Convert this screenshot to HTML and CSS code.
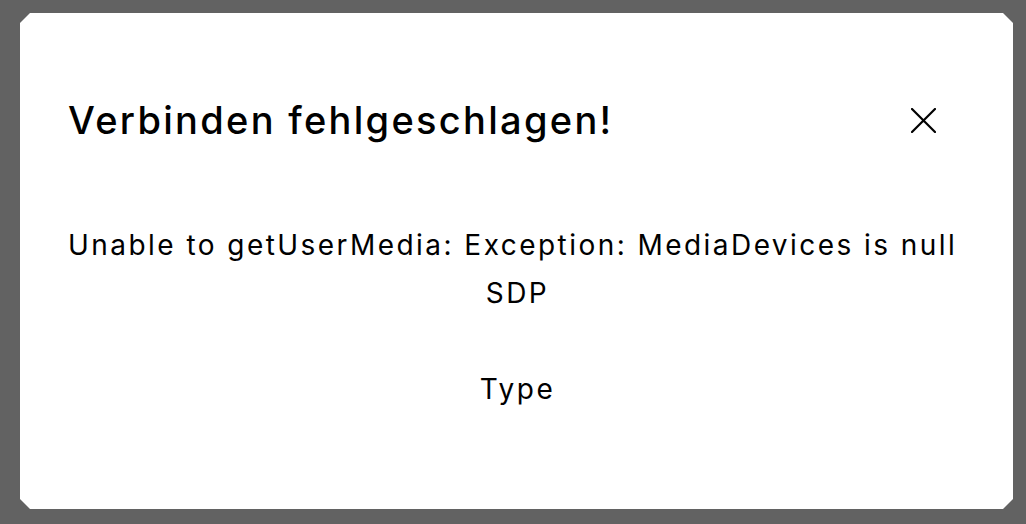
FILE: index.html
```html
<!DOCTYPE html>
<html lang="de">
<head>
<meta charset="utf-8">
<title>Verbinden fehlgeschlagen</title>
<link rel="stylesheet" href="styles.css">
</head>
<body>
<div class="overlay">
  <div class="modal">
    <div class="modal-header">
      <h2 class="modal-title">Verbinden fehlgeschlagen!</h2>
      <button class="close" aria-label="Schließen">
        <svg width="25" height="25" viewBox="0 0 25 25" fill="none" stroke="#000" stroke-width="2.2" stroke-linecap="round">
          <path d="M1 1L24 24M24 1L1 24"/>
        </svg>
      </button>
    </div>
    <div class="modal-body">
      <p class="line line-wide">Unable to getUserMedia: Exception: MediaDevices is null</p>
      <p class="line">SDP</p>
      <p class="line blank">&nbsp;</p>
      <p class="line">Type</p>
    </div>
  </div>
</div>
</body>
</html>
```

FILE: styles.css
```css
html, body {
  margin: 0;
  padding: 0;
}
body {
  background: #626262;
  width: 1026px;
  height: 524px;
  overflow: hidden;
  font-family: "Inter", "Open Sans", sans-serif;
  color: #000;
}
.overlay {
  padding: 13px 13px 0 20px;
}
.modal {
  width: 993px;
  height: 496px;
  background: #fff;
  box-sizing: border-box;
  padding: 83px 0 0 48px;
  clip-path: polygon(10px 0, calc(100% - 10px) 0, 100% 10px, 100% calc(100% - 10px), calc(100% - 10px) 100%, 10px 100%, 0 calc(100% - 10px), 0 10px);
  overflow: hidden;
}
.modal-header {
  display: flex;
  align-items: center;
  justify-content: space-between;
  padding-right: 77px;
}
.modal-title {
  margin: 0;
  font-size: 38px;
  line-height: 48px;
  font-weight: 500;
  letter-spacing: 2.3px;
}
.close {
  border: 0;
  background: none;
  padding: 0;
  margin-top: 1px;
  width: 25px;
  height: 25px;
  display: block;
  cursor: pointer;
}
.close svg {
  display: block;
}
.modal-body {
  margin-top: 77px;
  width: 899px;
  text-align: center;
}
.line {
  margin: 0;
  font-size: 28px;
  line-height: 48px;
  font-weight: 400;
  letter-spacing: 2.45px;
  white-space: nowrap;
}
.line-wide {
  text-align: left;
}
```
